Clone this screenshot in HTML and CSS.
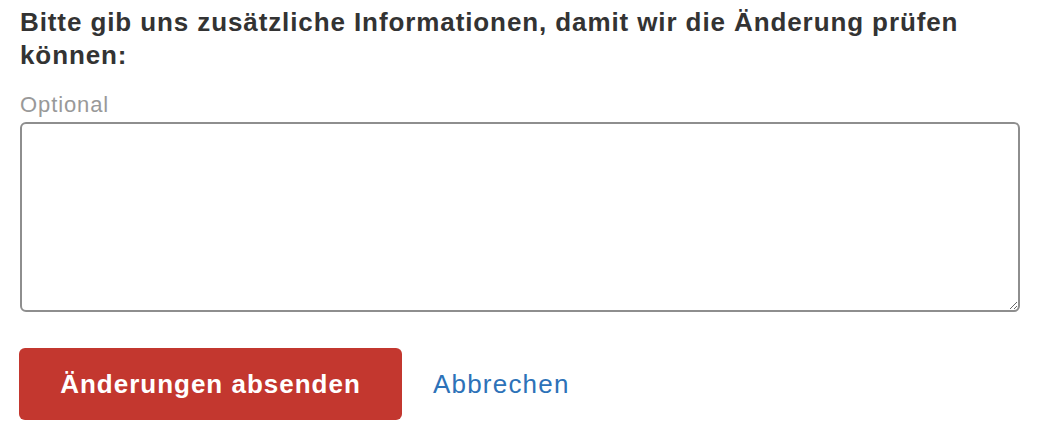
FILE: index.html
```html
<!DOCTYPE html>
<html lang="de">
<head>
<meta charset="utf-8">
<link rel="stylesheet" href="styles.css">
</head>
<body>
<form class="form">
  <h2 class="title">Bitte gib uns zusätzliche Informationen, damit wir die Änderung prüfen können:</h2>
  <label class="hint" for="info">Optional</label>
  <textarea id="info" class="field"></textarea>
  <div class="actions">
    <button type="button" class="submit">Änderungen absenden</button>
    <a class="cancel" href="#">Abbrechen</a>
  </div>
</form>
</body>
</html>
```

FILE: styles.css
```css
html, body {
  margin: 0;
  padding: 0;
  background: #fff;
}
body {
  font-family: "Liberation Sans", Arial, sans-serif;
  color: #333;
}
.form {
  display: flex;
  flex-direction: column;
  padding: 6px 22px 0 20px;
}
.title {
  margin: 0;
  font-size: 26px;
  line-height: 33px;
  font-weight: bold;
  letter-spacing: 0.9px;
  color: #333;
}
.hint {
  margin-top: 20px;
  font-size: 22px;
  line-height: 26px;
  letter-spacing: 0.9px;
  color: #999;
}
.field {
  margin-top: 4px;
  box-sizing: border-box;
  width: 100%;
  height: 190px;
  border: 2px solid #8e8e8e;
  border-radius: 6px;
  background: #fff;
  resize: vertical;
  font: inherit;
}
.actions {
  display: flex;
  align-items: center;
  gap: 31px;
  margin-top: 36px;
}
.submit {
  margin-left: -1px;
  width: 383px;
  height: 72px;
  border: none;
  border-radius: 6px;
  background: #c3372f;
  color: #fff;
  font-family: "Liberation Sans", Arial, sans-serif;
  font-size: 26px;
  font-weight: bold;
  letter-spacing: 1px;
  cursor: pointer;
}
.cancel {
  font-size: 26px;
  letter-spacing: 1.2px;
  color: #2d72b8;
  text-decoration: none;
}
```
